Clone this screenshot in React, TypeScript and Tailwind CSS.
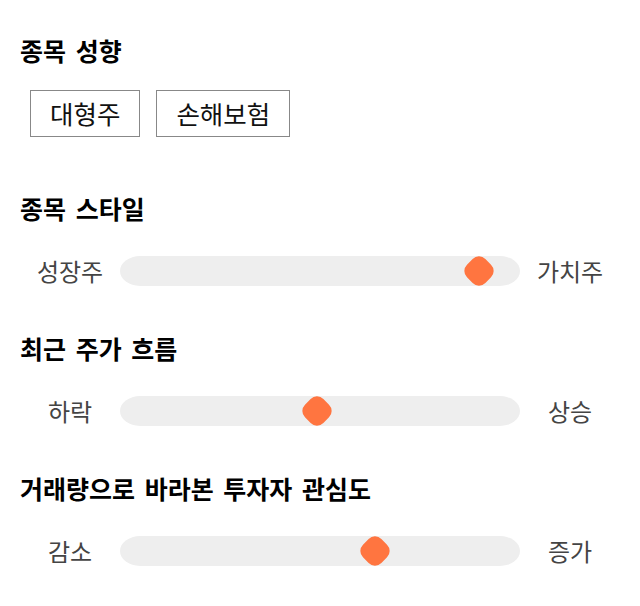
import React from "react";

const font = { fontFamily: '"Noto Sans CJK KR", "Noto Sans", sans-serif' };

function Thumb({ left }: { left: string }) {
  return (
    <div
      className={`absolute top-1/2 ${left} -translate-x-1/2 -translate-y-1/2 rotate-45 w-[26px] h-[26px] rounded-[9px] bg-[#ff7540]`}
    />
  );
}

function SliderRow({ l, r, thumb }: { l: string; r: string; thumb: React.ReactNode }) {
  return (
    <div className="flex items-center mt-[32px]">
      <div className="w-[100px] text-center text-[24px] leading-[30px] text-[#444]">{l}</div>
      <div className="relative w-[400px] h-[30px] rounded-[20px/15px] bg-[#eeeeee]">{thumb}</div>
      <div className="w-[100px] text-center text-[24px] leading-[30px] text-[#444]">{r}</div>
    </div>
  );
}

export default function App() {
  return (
    <div className="w-[640px] h-[606px] bg-white px-5 pt-[34px]" style={font}>
      <h2 className="text-[25px] leading-[32px] font-bold text-black [word-spacing:4px]">종목 성향</h2>
      <div className="flex gap-4 mt-[24px] pl-[10px]">
        <div className="h-[47px] px-[19px] border border-[#888] flex items-center text-[25.5px] text-[#111]">대형주</div>
        <div className="h-[47px] px-[19px] border border-[#888] flex items-center text-[25.5px] text-[#111]">손해보험</div>
      </div>

      <h2 className="mt-[55px] text-[25px] leading-[32px] font-bold text-black [word-spacing:4px]">종목 스타일</h2>
      <SliderRow l="성장주" r="가치주" thumb={<Thumb left="left-[359px]" />} />

      <h2 className="mt-[46px] text-[25px] leading-[32px] font-bold text-black [word-spacing:4px]">최근 주가 흐름</h2>
      <SliderRow l="하락" r="상승" thumb={<Thumb left="left-[197px]" />} />

      <h2 className="mt-[46px] text-[25px] leading-[32px] font-bold text-black [word-spacing:4px]">거래량으로 바라본 투자자 관심도</h2>
      <SliderRow l="감소" r="증가" thumb={<Thumb left="left-[255px]" />} />
    </div>
  );
}
